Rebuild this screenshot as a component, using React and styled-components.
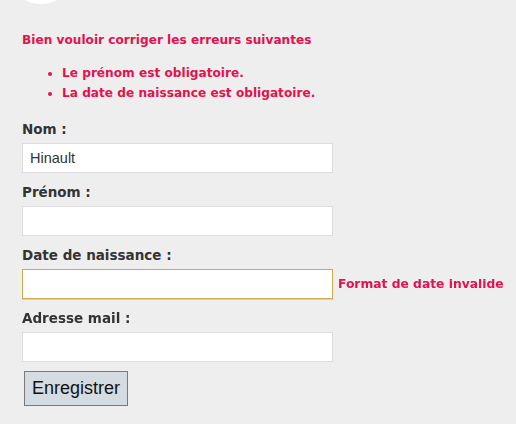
import React from 'react';
import styled, { createGlobalStyle } from 'styled-components';

const GlobalStyle = createGlobalStyle`
  html, body {
    margin: 0;
    padding: 0;
    background: #eeeeee;
  }
  body {
    font-family: "DejaVu Sans", Verdana, sans-serif;
  }
`;

const ERROR = '#e5114f';

const Page = styled.div`
  width: 516px;
  height: 424px;
  overflow: hidden;
  background: #eeeeee;
`;

const Header = styled.div`
  height: 5px;
  overflow: hidden;
  padding-left: 7px;
`;

const Logo = styled.div`
  width: 68px;
  height: 68px;
  border-radius: 50%;
  background: #ffffff;
  margin-top: -64px;
`;

const Content = styled.div`
  padding: 25px 22px 0 22px;
`;

const ErrorTitle = styled.p`
  margin: 0;
  color: ${ERROR};
  font-weight: bold;
  font-size: 12.15px;
  line-height: 20px;
`;

const ErrorList = styled.ul`
  margin: 13px 0 17px 0;
  padding-left: 40px;
  color: ${ERROR};
  font-weight: bold;
  font-size: 12.15px;
  line-height: 20px;
`;

const Field = styled.div`
  display: flex;
  flex-direction: column;
  margin-bottom: 10px;
`;

const Label = styled.label`
  color: #333333;
  font-weight: bold;
  font-size: 13.5px;
  line-height: 18px;
  margin-bottom: 5px;
`;

const InputRow = styled.div`
  display: flex;
  align-items: center;
  gap: 5px;
`;

const Input = styled.input`
  box-sizing: border-box;
  flex-shrink: 0;
  width: 311px;
  height: 30px;
  margin: 0;
  padding: 0 7px;
  background: #ffffff;
  border: 1px solid ${(p) => (p.$invalid ? '#d4a94e' : '#dddddd')};
  border-radius: 0;
  font-family: "Liberation Sans", Arial, sans-serif;
  font-size: 14.5px;
  color: #333333;
  outline: none;
  box-shadow: ${(p) => (p.$invalid ? '0 1px 0 #e6cf95' : 'none')};
`;

const FieldError = styled.span`
  color: ${ERROR};
  font-weight: bold;
  font-size: 12.3px;
  white-space: nowrap;
`;

const SubmitButton = styled.button`
  margin: -1px 0 0 2px;
  height: 35px;
  padding: 0 7px;
  background: #d4dce2;
  border: 1px solid #7a7a7a;
  border-radius: 0;
  font-family: "Liberation Sans", Arial, sans-serif;
  font-size: 18px;
  color: #111111;
`;

const fields = [
  { id: 'nom', label: 'Nom :', value: 'Hinault' },
  { id: 'prenom', label: 'Prénom :', value: '' },
  { id: 'naissance', label: 'Date de naissance :', value: '', error: 'Format de date invalide' },
  { id: 'mail', label: 'Adresse mail :', value: '' },
];

export default function App() {
  const dateRef = React.useRef(null);

  React.useEffect(() => {
    if (dateRef.current) dateRef.current.focus();
  }, []);

  return (
    <Page>
      <GlobalStyle />
      <Header>
        <Logo />
      </Header>
      <Content>
        <ErrorTitle>Bien vouloir corriger les erreurs suivantes</ErrorTitle>
        <ErrorList>
          <li>Le prénom est obligatoire.</li>
          <li>La date de naissance est obligatoire.</li>
        </ErrorList>
        {fields.map((f) => (
          <Field key={f.id}>
            <Label htmlFor={f.id}>{f.label}</Label>
            <InputRow>
              <Input
                id={f.id}
                defaultValue={f.value}
                $invalid={!!f.error}
                ref={f.error ? dateRef : undefined}
              />
              {f.error && <FieldError>{f.error}</FieldError>}
            </InputRow>
          </Field>
        ))}
        <SubmitButton type="submit">Enregistrer</SubmitButton>
      </Content>
    </Page>
  );
}
